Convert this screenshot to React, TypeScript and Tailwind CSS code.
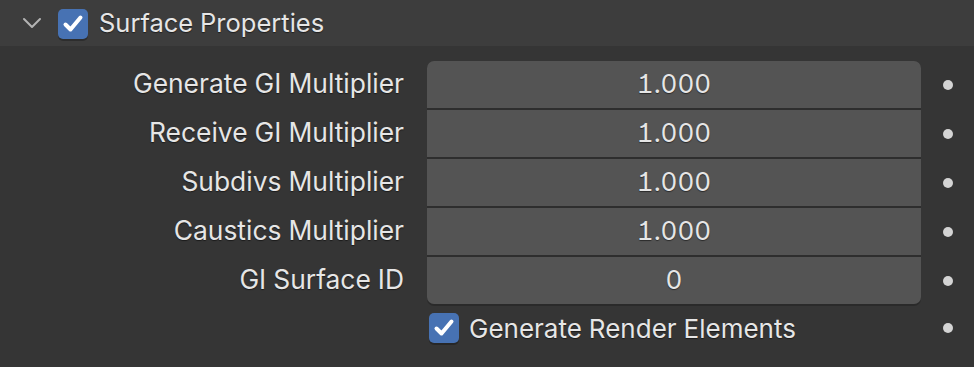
import React from 'react';

const rows = [
  { label: 'Generate GI Multiplier', value: '1.000' },
  { label: 'Receive GI Multiplier', value: '1.000' },
  { label: 'Subdivs Multiplier', value: '1.000' },
  { label: 'Caustics Multiplier', value: '1.000' },
  { label: 'GI Surface ID', value: '0' },
];

const Check = ({ size }: { size: number }) => (
  <div
    className="flex items-center justify-center rounded-[5px] bg-[#4772b3] shadow-[0_2px_0_rgba(0,0,0,0.25)]"
    style={{ width: size, height: size }}
  >
    <svg viewBox="0 0 24 24" width={size * 0.8} height={size * 0.8} fill="none" stroke="#ffffff" strokeWidth={4} strokeLinecap="round" strokeLinejoin="round">
      <path d="M4.5 12.5l5 5L19.5 5.5" />
    </svg>
  </div>
);

const Dot = () => <div className="w-[10px] h-[10px] rounded-full bg-[#d4d4d4]" />;

export default function App() {
  return (
    <div className="w-[974px] h-[367px] bg-[#353535] font-['Inter','Noto_Sans',sans-serif] [font-feature-settings:'cv01','tnum'] text-[#e6e6e6] [text-shadow:0_1px_1px_rgba(0,0,0,0.5)]">
      <div className="h-[46px] bg-[#3d3d3d] flex items-center">
        <svg className="ml-[22px]" width="20" height="12" viewBox="0 0 20 12" fill="none" stroke="#b4b4b4" strokeWidth={2} strokeLinecap="round" strokeLinejoin="round">
          <path d="M2 2l8 8 8-8" />
        </svg>
        <div className="ml-[16px] mt-[1px]">
          <Check size={30} />
        </div>
        <span className="ml-[11px] text-[25.5px] leading-none">Surface Properties</span>
      </div>

      <div className="flex pt-[15px]">
        <div className="w-[404px] flex flex-col gap-[2px] text-[26.4px]">
          {rows.map((r) => (
            <div key={r.label} className="h-[47px] flex items-center justify-end pb-[2px]">
              {r.label}
            </div>
          ))}
        </div>
        <div className="ml-[23px] w-[494px] flex flex-col gap-[2px] bg-[#2e2e2e] rounded-[7px] overflow-hidden shadow-[0_2px_0_rgba(0,0,0,0.2)]">
          {rows.map((r) => (
            <div key={r.label} className="h-[47px] bg-[#545454] flex items-center justify-center text-[26px] pb-[2px]">
              {r.value}
            </div>
          ))}
        </div>
        <div className="flex-1 flex flex-col gap-[2px]">
          {rows.map((r) => (
            <div key={r.label} className="h-[47px] flex items-center justify-end pr-[21px]">
              <Dot />
            </div>
          ))}
        </div>
      </div>

      <div className="flex items-center mt-[8px] h-[32px]">
        <div className="ml-[429px]">
          <Check size={30} />
        </div>
        <span className="ml-[10px] text-[26px]">Generate Render Elements</span>
        <div className="ml-auto mr-[21px]">
          <Dot />
        </div>
      </div>
    </div>
  );
}
